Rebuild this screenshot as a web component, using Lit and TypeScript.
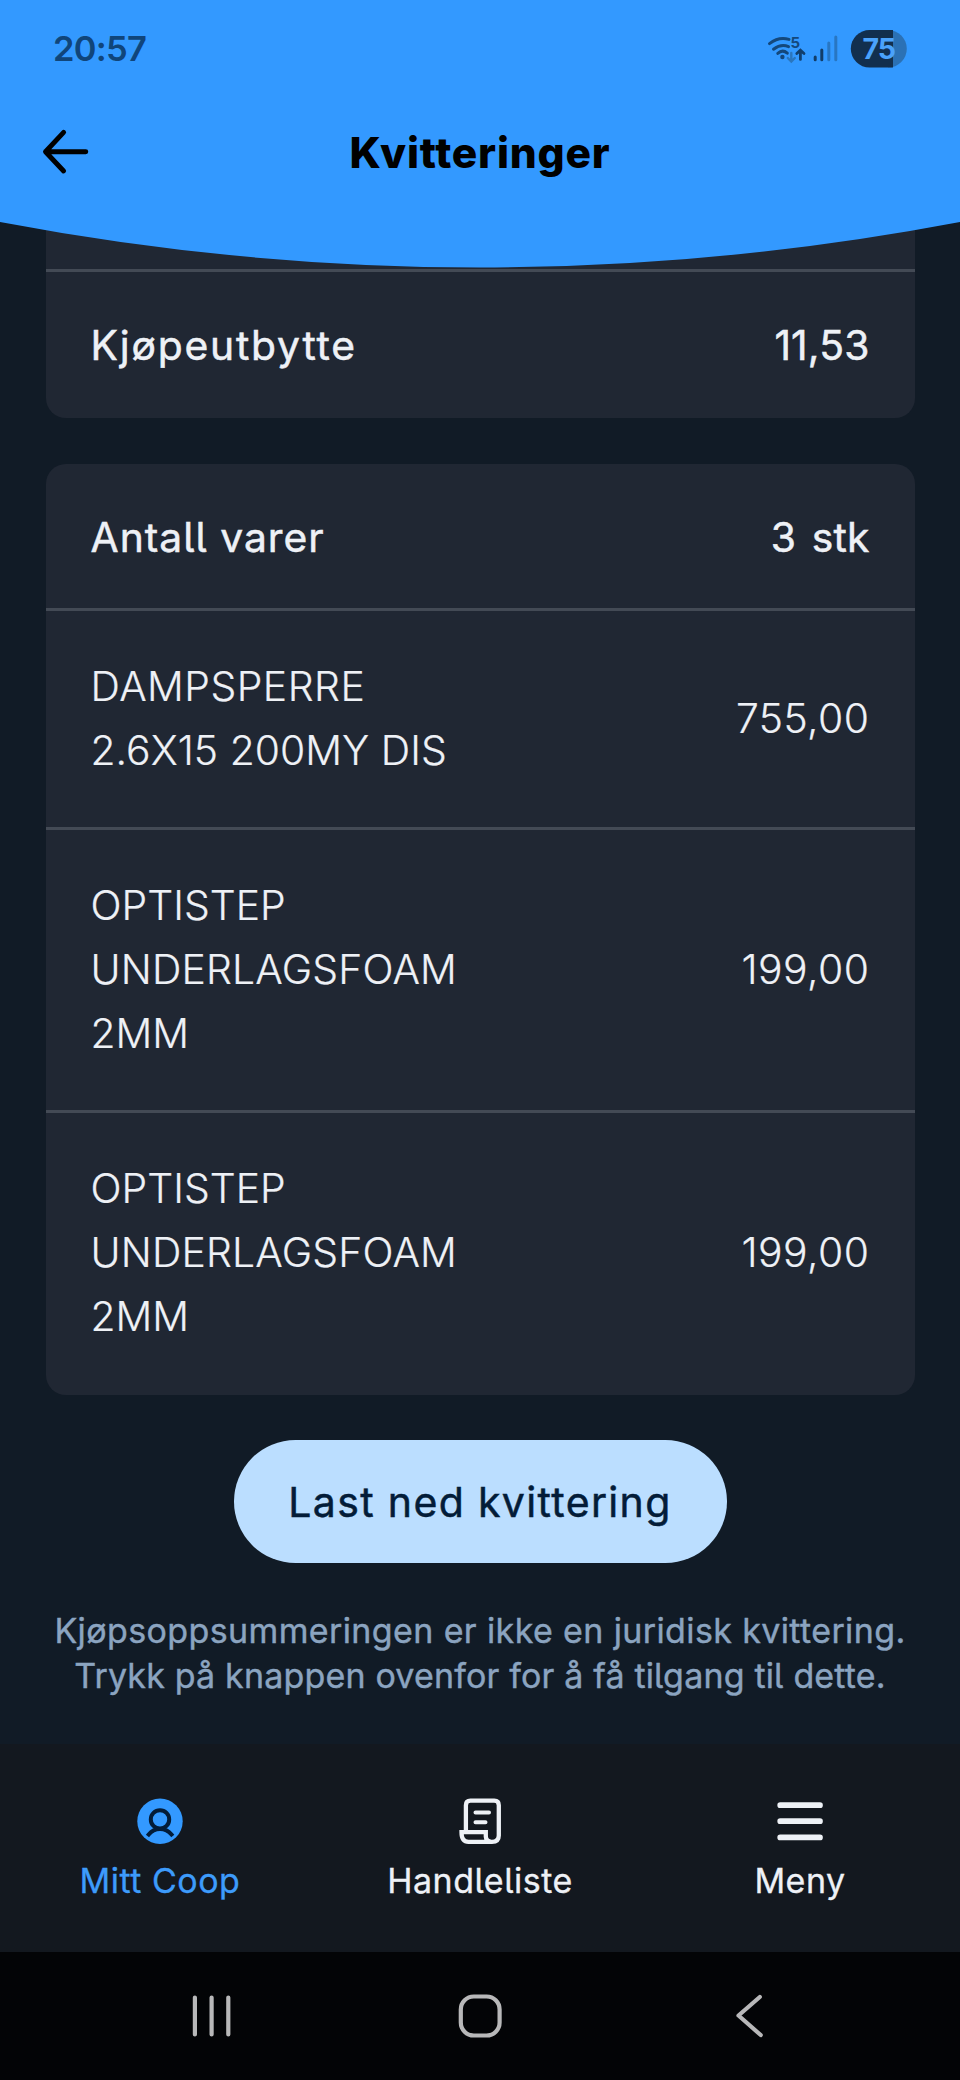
import { LitElement, html, css, svg } from "lit";
import { customElement, property } from "lit/decorators.js";
import { classMap } from "lit/directives/class-map.js";

interface Item {
  lines: { text: string; track: string }[];
  price: string;
}

const foam: Item = {
  lines: [
    { text: "OPTISTEP", track: "t-none" },
    { text: "UNDERLAGSFOAM", track: "t-slight" },
    { text: "2MM", track: "t-none" },
  ],
  price: "199,00",
};

const items: Item[] = [
  {
    lines: [
      { text: "DAMPSPERRE", track: "t-small" },
      { text: "2.6X15 200MY DIS", track: "t-none" },
    ],
    price: "755,00",
  },
  foam,
  foam,
];

@customElement("status-bar")
export class StatusBar extends LitElement {
  static styles = css`
    :host {
      display: flex;
      justify-content: space-between;
      align-items: flex-start;
      height: 98px;
      box-sizing: border-box;
      padding: 28px 48px 0 53px;
    }
    .clock {
      font: 600 34.5px/42px Inter, sans-serif;
      letter-spacing: -0.75px;
      color: #10457a;
    }
    .icons {
      display: block;
      width: 148px;
      height: 42px;
    }
    .small {
      font: 700 15px Inter, sans-serif;
    }
    .level {
      font: 700 28.5px Inter, sans-serif;
      letter-spacing: -1px;
    }
  `;

  render() {
    return html`
      <span class="clock">20:57</span>
      <svg class="icons" viewBox="764 28 148 42">
        <g fill="none" stroke="#14487c" stroke-width="3" stroke-linecap="round">
          <path d="M769.5 43.6Q779 36.2 789 39.4" />
          <path d="M773.5 49.2Q781 43.6 788.5 46.6" />
          <path d="M777.8 53.4Q782.5 49 787.3 53.2" />
        </g>
        <circle cx="782.4" cy="57" r="2.2" fill="#14487c" />
        <text class="small" x="790.6" y="48" fill="#14487c">5</text>
        <path d="M791.3 53v8M787.8 58l3.5 3.6 3.5-3.6" fill="none" stroke="#2a76be" stroke-width="2.4" stroke-linecap="round" />
        <path d="M800.4 59.4v-8.4M796.8 53.6l3.6-3.4 3.6 3.4" fill="none" stroke="#113e6c" stroke-width="2.8" stroke-linecap="round" />
        <g stroke-width="3" stroke-linecap="round">
          <path d="M815.2 57v2.8M821.8 50v9.8" stroke="#123d68" />
          <path d="M828.8 43v16.8M835.8 37v22.8" stroke="#2876c2" />
        </g>
        <path d="M888 30v37.6a18.8 18.8 0 0 0 0-37.6z" fill="#2b71b5" />
        <path d="M893 30h-23.4a18.8 18.8 0 0 0 0 37.6H893z" fill="#122f4e" />
        <text class="level" x="862.5" y="59.4" fill="#4aa2fb">75</text>
      </svg>
    `;
  }
}

@customElement("app-header")
export class AppHeader extends LitElement {
  static styles = css`
    :host {
      display: grid;
      position: relative;
      z-index: 1;
      height: 268px;
    }
    .shape,
    .body {
      grid-area: 1 / 1;
    }
    .shape {
      display: block;
      width: 960px;
      height: 268px;
    }
    .bar {
      display: grid;
      grid-template-columns: 46px 1fr 46px;
      align-items: center;
      height: 108px;
      padding: 0 42px;
    }
    .back {
      display: block;
      width: 48px;
      height: 48px;
    }
    .title {
      margin: 0;
      padding-top: 1px;
      text-align: center;
      font: 800 42.5px/60px Inter, sans-serif;
      letter-spacing: 0.8px;
      color: #000;
    }
  `;

  render() {
    return html`
      <svg class="shape" viewBox="0 0 960 268">
        <path d="M0 0H960V222Q480 313 0 222Z" fill="#3399ff" />
      </svg>
      <div class="body">
        <status-bar></status-bar>
        <div class="bar">
          <svg class="back" viewBox="42 128 48 48">
            <path d="M45.5 151.7H85.8M63.6 132.4L45.5 151.7L63.6 171" fill="none" stroke="#000" stroke-width="4.9" stroke-linecap="round" stroke-linejoin="round" />
          </svg>
          <h1 class="title">Kvitteringer</h1>
        </div>
      </div>
    `;
  }
}

@customElement("receipt-row")
export class ReceiptRow extends LitElement {
  @property({ attribute: false }) lines: Item["lines"] = [];
  @property() value = "";
  @property({ type: Boolean }) strong = false;

  static styles = css`
    :host {
      display: block;
    }
    .row {
      display: flex;
      justify-content: space-between;
      align-items: center;
      padding: 43px 45px 47px;
      font: 300 40.8px/64px Inter, sans-serif;
      font-feature-settings: "cv05";
      white-space: nowrap;
      -webkit-text-stroke: 0.2px currentColor;
    }
    .row.strong {
      padding: 46px 45px 44px;
      font-weight: 400;
      line-height: 54px;
      -webkit-text-stroke-width: 0.5px;
    }
    .line {
      display: block;
    }
    .value {
      letter-spacing: 0.5px;
    }
    .strong .value {
      letter-spacing: 0.15px;
      word-spacing: 4px;
    }
    .t-none {
      letter-spacing: 0.05px;
    }
    .t-slight {
      letter-spacing: 0.2px;
    }
    .t-small {
      letter-spacing: 0.5px;
    }
    .t-mid {
      letter-spacing: 1px;
    }
    .t-wide {
      letter-spacing: 1.8px;
    }
  `;

  render() {
    return html`
      <div class=${classMap({ row: true, strong: this.strong })}>
        <div>${this.lines.map((l) => html`<span class="line ${l.track}">${l.text}</span>`)}</div>
        <span class="value">${this.value}</span>
      </div>
    `;
  }
}

@customElement("tab-bar")
export class TabBar extends LitElement {
  static styles = css`
    :host {
      display: grid;
      grid-template-columns: repeat(3, 1fr);
      height: 208px;
      background: #13181f;
      color: #eef1f6;
    }
    .tab {
      display: flex;
      flex-direction: column;
      align-items: center;
      padding-top: 53px;
      font: 400 34px/44px Inter, sans-serif;
      font-feature-settings: "cv05";
      letter-spacing: 0.5px;
      -webkit-text-stroke: 0.3px currentColor;
    }
    .active {
      color: #3d9bfb;
    }
    .icon {
      display: block;
      width: 50px;
      height: 50px;
      margin-bottom: 12px;
    }
  `;

  render() {
    return html`
      <div class="tab active">
        <svg class="icon" viewBox="135 1797 50 50">
          <circle cx="160" cy="1821.3" r="22.7" fill="#3399ff" />
          <g fill="none" stroke="#031c38" stroke-width="4">
            <circle cx="160" cy="1819.4" r="9.2" />
            <path d="M148.7 1834.5Q153 1829 160 1829T171.5 1834.5" stroke-linecap="square" />
          </g>
        </svg>
        <span>Mitt Coop</span>
      </div>
      <div class="tab">
        <svg class="icon" viewBox="455 1797 50 50">
          <g fill="none" stroke="#eef1f6" stroke-width="4.3">
            <path d="M465.9 1832V1805.2Q465.9 1800.7 470.4 1800.7H494.3Q498.8 1800.7 498.8 1805.2V1835.5Q498.8 1841.8 492 1841.8H468.5Q461.5 1841.8 461.5 1832.2H485.8V1836.5Q486.2 1841.8 491.5 1841.8" />
            <path d="M475.5 1812.4H489M475.5 1822.3H485.5" stroke-width="4" stroke-linecap="round" />
          </g>
        </svg>
        <span>Handleliste</span>
      </div>
      <div class="tab">
        <svg class="icon" viewBox="775 1797 50 50">
          <path d="M780.2 1805.2H820M780.2 1821.2H820M780.2 1837.4H820" stroke="#eef1f6" stroke-width="5.7" stroke-linecap="round" />
        </svg>
        <span>Meny</span>
      </div>
    `;
  }
}

@customElement("system-bar")
export class SystemBar extends LitElement {
  static styles = css`
    :host {
      display: flex;
      justify-content: space-between;
      height: 128px;
      box-sizing: border-box;
      padding: 39px 186px 0;
      background: #030406;
    }
    .key {
      display: block;
      width: 50px;
      height: 50px;
    }
  `;

  render() {
    const shapes = [
      { box: "186 1991 50 50", shape: svg`<path d="M194.9 1997.5V2034.5M211.6 1997.5V2034.5M228.3 1997.5V2034.5" />` },
      { box: "455 1991 50 50", shape: svg`<rect x="460.8" y="1996.5" width="38.8" height="39" rx="13" />` },
      { box: "724 1991 50 50", shape: svg`<path d="M759.8 1997L738.5 2015.5L760.7 2035" />` },
    ];
    return html`${shapes.map(
      (s) => html`<svg class="key" viewBox=${s.box} fill="none" stroke="#b8b8b9" stroke-width="4.2" stroke-linecap="round" stroke-linejoin="round">${s.shape}</svg>`
    )}`;
  }
}

@customElement("app-root")
export class AppRoot extends LitElement {
  static styles = css`
    :host {
      display: flex;
      flex-direction: column;
      width: 960px;
      height: 2080px;
      overflow: hidden;
      background: #111b26;
      color: #eef1f6;
      font-family: Inter, sans-serif;
    }
    .content {
      flex: 1;
      display: flex;
      flex-direction: column;
      align-items: center;
      margin-top: -68px;
    }
    .card {
      width: 869px;
      border-radius: 20px;
      background: #202733;
    }
    .card + .card {
      margin-top: 46px;
    }
    .divider {
      height: 3px;
      background: #434a55;
    }
    .upper {
      height: 69px;
    }
    .first-row {
      padding-bottom: 2px;
    }
    .item {
      margin-bottom: -2px;
    }
    .item:last-child {
      margin-bottom: 0;
    }
    .download {
      margin: 45px 0 0;
      width: 493px;
      height: 123px;
      border: 0;
      border-radius: 62px;
      padding: 0;
      background: #bbdeff;
      color: #031c38;
      font: 400 41px/60px Inter, sans-serif;
      font-feature-settings: "cv05";
      letter-spacing: 1.35px;
      white-space: nowrap;
      -webkit-text-stroke: 0.5px currentColor;
    }
    .note {
      margin: 45px 0 0;
      text-align: center;
      font: 400 34px/45px Inter, sans-serif;
      font-feature-settings: "cv05";
      letter-spacing: 0.38px;
      color: #8ba4c0;
      white-space: nowrap;
      -webkit-text-stroke: 0.4px currentColor;
    }
    .second {
      letter-spacing: 0.17px;
    }
  `;

  render() {
    return html`
      <app-header></app-header>
      <main class="content">
        <section class="card">
          <div class="upper"></div>
          <div class="divider"></div>
          <receipt-row class="first-row" strong .lines=${[{ text: "Kjøpeutbytte", track: "t-wide" }]} value="11,53"></receipt-row>
        </section>
        <section class="card">
          <receipt-row strong .lines=${[{ text: "Antall varer", track: "t-mid" }]} value="3 stk"></receipt-row>
          ${items.map(
            (item) => html`
              <div class="divider"></div>
              <receipt-row class="item" .lines=${item.lines} value=${item.price}></receipt-row>
            `
          )}
        </section>
        <button class="download">Last ned kvittering</button>
        <p class="note">
          Kjøpsoppsummeringen er ikke en juridisk kvittering.<br /><span class="second">Trykk på knappen ovenfor for å få tilgang til dette.</span>
        </p>
      </main>
      <tab-bar></tab-bar>
      <system-bar></system-bar>
    `;
  }
}
